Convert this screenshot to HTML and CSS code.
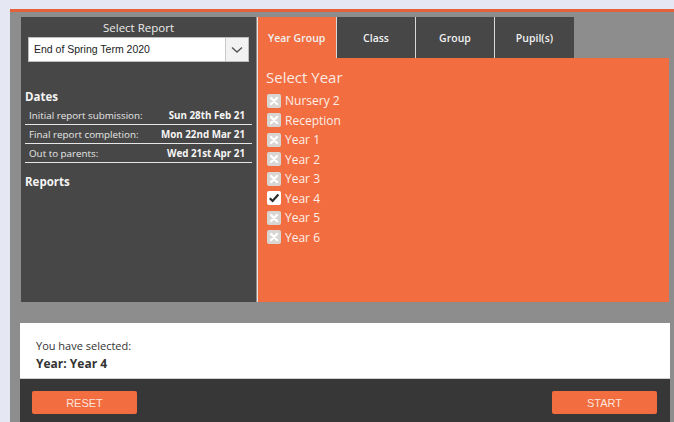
FILE: index.html
```html
<!DOCTYPE html>
<html lang="en">
<head>
<meta charset="utf-8">
<title>Report Selection</title>
<link rel="stylesheet" href="styles.css">
</head>
<body>
<div class="page">
  <div class="app">
    <div class="main">
      <aside class="sidebar">
        <div class="sidebar-title">Select Report</div>
        <div class="select">
          <span class="select-value">End of Spring Term 2020</span>
          <span class="select-btn">
            <svg width="12" height="8" viewBox="0 0 12 8"><path d="M1 1.5 L6 6 L11 1.5" fill="none" stroke="#555" stroke-width="1.4"/></svg>
          </span>
        </div>
        <h3 class="section-title dates-title">Dates</h3>
        <div class="date-row"><span>Initial report submission:</span><b>Sun 28th Feb 21</b></div>
        <div class="date-row"><span>Final report completion:</span><b>Mon 22nd Mar 21</b></div>
        <div class="date-row"><span>Out to parents:</span><b>Wed 21st Apr 21</b></div>
        <h3 class="section-title">Reports</h3>
      </aside>
      <section class="content">
        <nav class="tabs">
          <div class="tab active">Year Group</div>
          <div class="tab">Class</div>
          <div class="tab">Group</div>
          <div class="tab last">Pupil(s)</div>
        </nav>
        <div class="panel">
          <div class="panel-title">Select Year</div>
          <ul class="options">
            <li><span class="box off"><svg viewBox="0 0 14 14"><path d="M4 4 L10 10 M10 4 L4 10" stroke="#fff" stroke-width="2.4" stroke-linecap="round"/></svg></span>Nursery 2</li>
            <li><span class="box off"><svg viewBox="0 0 14 14"><path d="M4 4 L10 10 M10 4 L4 10" stroke="#fff" stroke-width="2.4" stroke-linecap="round"/></svg></span>Reception</li>
            <li><span class="box off"><svg viewBox="0 0 14 14"><path d="M4 4 L10 10 M10 4 L4 10" stroke="#fff" stroke-width="2.4" stroke-linecap="round"/></svg></span>Year 1</li>
            <li><span class="box off"><svg viewBox="0 0 14 14"><path d="M4 4 L10 10 M10 4 L4 10" stroke="#fff" stroke-width="2.4" stroke-linecap="round"/></svg></span>Year 2</li>
            <li><span class="box off"><svg viewBox="0 0 14 14"><path d="M4 4 L10 10 M10 4 L4 10" stroke="#fff" stroke-width="2.4" stroke-linecap="round"/></svg></span>Year 3</li>
            <li><span class="box on"><svg viewBox="0 0 14 14"><path d="M2.8 7.2 L5.6 10 L11.4 3.6" fill="none" stroke="#2b2b2b" stroke-width="2.2"/></svg></span>Year 4</li>
            <li><span class="box off"><svg viewBox="0 0 14 14"><path d="M4 4 L10 10 M10 4 L4 10" stroke="#fff" stroke-width="2.4" stroke-linecap="round"/></svg></span>Year 5</li>
            <li><span class="box off"><svg viewBox="0 0 14 14"><path d="M4 4 L10 10 M10 4 L4 10" stroke="#fff" stroke-width="2.4" stroke-linecap="round"/></svg></span>Year 6</li>
          </ul>
        </div>
      </section>
    </div>
    <div class="bottom">
      <div class="summary">
        <div class="summary-label">You have selected:</div>
        <div class="summary-value">Year: Year 4</div>
      </div>
      <div class="actions">
        <button class="btn">RESET</button>
        <button class="btn">START</button>
      </div>
    </div>
  </div>
</div>
</body>
</html>
```

FILE: styles.css
```css
* { box-sizing: border-box; }

html, body {
  margin: 0;
  height: 100%;
  overflow: hidden;
}

body {
  background: #e5e7f3;
  font-family: "Open Sans", "DejaVu Sans", sans-serif;
}

.page {
  margin-left: 10px;
  padding-top: 9px;
  height: 422px;
}

.app {
  height: 413px;
  border-top: 3px solid #e4603a;
  background: #8d8d8d;
  padding: 5px 5px 0 11px;
}

/* top area: sidebar + tab panel */
.main {
  display: flex;
  height: 285px;
}

.sidebar {
  width: 235px;
  background: #474747;
  color: #f2f2f2;
  padding: 3px 4px 0 4px;
}

.sidebar-title {
  text-align: center;
  font-size: 11.5px;
  line-height: 15px;
  color: #ececec;
}

.select {
  display: flex;
  height: 25px;
  margin: 2px 3px 0 3px;
  background: #fff;
  border: 1px solid #bdbdbd;
}

.select-value {
  flex: 1;
  font-family: "Liberation Sans", Arial, sans-serif;
  font-size: 10.5px;
  line-height: 23px;
  padding-left: 5px;
  color: #222;
}

.select-btn {
  width: 23px;
  background: #f2f2f2;
  border-left: 1px solid #c8c8c8;
  display: flex;
  align-items: center;
  justify-content: center;
}

.section-title {
  margin: 0;
  font-size: 11.5px;
  font-weight: 700;
  line-height: 16px;
  color: #f4f4f4;
}

.dates-title {
  margin-top: 27px;
  margin-bottom: 1px;
}

.date-row {
  display: flex;
  justify-content: space-between;
  align-items: center;
  height: 19px;
  padding: 0 7px 0 4px;
  border-bottom: 1px solid #e6e6e6;
  font-size: 9.8px;
  color: #e8e8e8;
}

.date-row b {
  font-weight: 700;
  color: #f6f6f6;
}

.date-row + .section-title { margin-top: 11px; }

/* right side */
.content {
  flex: 1;
  display: flex;
  flex-direction: column;
  border-left: 1px solid #e9e3de;
  margin-left: 1px;
}

.tabs {
  display: flex;
  height: 41px;
}

.tab {
  width: 79px;
  background: #474747;
  border-right: 1px solid #d8d8d8;
  color: #f0f0f0;
  font-size: 10.5px;
  font-weight: 600;
  display: flex;
  align-items: center;
  justify-content: center;
}

.tab.active {
  background: #f26d40;
  justify-content: flex-start;
  padding-left: 10px;
}

.tab.last { border-right: none; }

.panel {
  flex: 1;
  background: #f26d40;
  padding: 9px 8px 0 8px;
  color: #fff;
}

.panel-title {
  font-size: 15px;
  line-height: 20px;
  color: #fbe9e2;
}

.options {
  list-style: none;
  margin: 4px 0 0 0;
  padding: 0;
}

.options li {
  display: flex;
  align-items: center;
  height: 19.5px;
  font-size: 12px;
  color: #fdeee8;
}

.box {
  width: 14px;
  height: 14px;
  border-radius: 2px;
  margin: 0 4px 0 1px;
  display: flex;
}

.box svg { width: 14px; height: 14px; }

.box.off { background: #d8d5d3; }
.box.on { background: #ffffff; }

/* bottom summary + actions */
.bottom {
  margin: 21px -1px 0 -1px;
}

.summary {
  background: #ffffff;
  height: 56px;
  padding: 13px 16px 0 16px;
  border-bottom: 1px solid #cfcfcf;
}

.summary-label {
  font-size: 11px;
  line-height: 19px;
  color: #333;
}

.summary-value {
  font-size: 12px;
  font-weight: 700;
  line-height: 18px;
  color: #333;
}

.actions {
  background: #373737;
  height: 50px;
  display: flex;
  justify-content: space-between;
  padding: 12px 13px 0 12px;
}

.btn {
  width: 105px;
  height: 23px;
  border: none;
  border-radius: 2px;
  background: #f26d40;
  color: #fbe4dc;
  font-family: "Liberation Sans", Arial, sans-serif;
  font-size: 11px;
  padding: 0;
}
```
